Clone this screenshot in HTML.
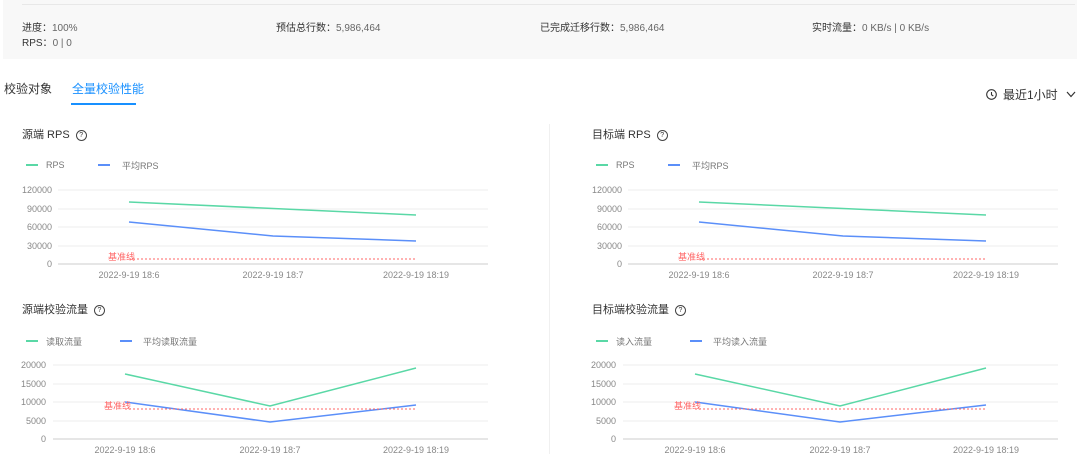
<!DOCTYPE html>
<html><head><meta charset="utf-8"><style>
body{margin:0;width:1080px;height:462px;background:#fff;font-family:"Liberation Sans","Noto Sans CJK SC",sans-serif;position:relative;overflow:hidden;color:#333}
.a{position:absolute;white-space:nowrap}
.s{font-size:10px;color:#333}.s b{font-weight:normal;color:#666}
.t{font-size:11px;color:#333}
.q{display:inline-block;width:9px;height:9px;border:1px solid #444;border-radius:50%;font-size:7px;text-align:center;line-height:9px;margin-left:6px;vertical-align:1px}
svg text{font-family:"Liberation Sans","Noto Sans CJK SC",sans-serif}
</style></head><body>
<div class="a" style="left:3px;top:0;width:1074px;height:59px;background:#f8f8f8"></div>
<div class="a" style="left:22px;top:4px;width:1053px;height:1px;background:#e8e8e8"></div>
<div class="a s" style="left:22px;top:19px">进度：<b>100%</b></div>
<div class="a s" style="left:22px;top:34px">RPS：<b>0 | 0</b></div>
<div class="a s" style="left:276px;top:19px">预估总行数：<b>5,986,464</b></div>
<div class="a s" style="left:540px;top:19px">已完成迁移行数：<b>5,986,464</b></div>
<div class="a s" style="left:812px;top:19px">实时流量：<b>0 KB/s | 0 KB/s</b></div>
<div class="a" style="font-size:12px;left:4px;top:80px;color:#333">校验对象</div>
<div class="a" style="font-size:12px;left:72px;top:80px;color:#1890ff">全量校验性能</div>
<div class="a" style="left:71px;top:103px;width:65px;height:2px;background:#1890ff"></div>
<div class="a" style="font-size:12px;left:986px;top:86px"><svg width="11" height="11" style="vertical-align:-1px;margin-right:6px"><circle cx="5.5" cy="5.5" r="4.8" fill="none" stroke="#333" stroke-width="1.1"/><path d="M5.5 3V5.8L7.3 7" fill="none" stroke="#333" stroke-width="1.1"/></svg>最近1小时<svg width="10" height="7" style="margin-left:8px;vertical-align:1px"><path d="M1 1L5 5.5L9 1" fill="none" stroke="#333" stroke-width="1.2"/></svg></div>
<div class="a" style="left:549px;top:124px;width:1px;height:330px;background:#f0f0f0"></div>

<svg class="a" style="left:0;top:0" width="1080" height="462">
<defs>
<g id="top">
<line x1="58" y1="190" x2="488" y2="190" stroke="#eee"/><line x1="58" y1="209" x2="488" y2="209" stroke="#eee"/><line x1="58" y1="227" x2="488" y2="227" stroke="#eee"/><line x1="58" y1="246" x2="488" y2="246" stroke="#eee"/><line x1="58" y1="264" x2="488" y2="264" stroke="#ccc"/>
<g font-size="9" fill="#888" text-anchor="end"><text x="52" y="193">120000</text><text x="52" y="212">90000</text><text x="52" y="230">60000</text><text x="52" y="249">30000</text><text x="52" y="267">0</text></g>
<g font-size="9" fill="#888" text-anchor="middle"><text x="129" y="278">2022-9-19 18:6</text><text x="273" y="278">2022-9-19 18:7</text><text x="416" y="278">2022-9-19 18:19</text></g>
<line x1="26" y1="165" x2="38" y2="165" stroke="#5ad8a6" stroke-width="2"/><text x="46" y="168" font-size="9" fill="#777">RPS</text>
<line x1="98" y1="165" x2="110" y2="165" stroke="#5b8ff9" stroke-width="2"/>
<polyline points="129,202 273,208.5 416,215" fill="none" stroke="#5ad8a6" stroke-width="1.5"/>
<polyline points="129,222 273,236 416,241" fill="none" stroke="#5b8ff9" stroke-width="1.5"/>
<line x1="129" y1="259" x2="416" y2="259" stroke="#f66" stroke-dasharray="2,2"/>
<text x="108" y="260" font-size="9" fill="#f66">基准线</text>
</g>
<g id="bot">
<line x1="53" y1="365" x2="488" y2="365" stroke="#eee"/><line x1="53" y1="384" x2="488" y2="384" stroke="#eee"/><line x1="53" y1="402" x2="488" y2="402" stroke="#eee"/><line x1="53" y1="421" x2="488" y2="421" stroke="#eee"/><line x1="53" y1="439" x2="488" y2="439" stroke="#ccc"/>
<g font-size="9" fill="#888" text-anchor="end"><text x="46" y="368">20000</text><text x="46" y="387">15000</text><text x="46" y="405">10000</text><text x="46" y="424">5000</text><text x="46" y="442">0</text></g>
<g font-size="9" fill="#888" text-anchor="middle"><text x="125" y="453">2022-9-19 18:6</text><text x="270" y="453">2022-9-19 18:7</text><text x="416" y="453">2022-9-19 18:19</text></g>
<line x1="26" y1="341" x2="38" y2="341" stroke="#5ad8a6" stroke-width="2"/>
<line x1="120" y1="341" x2="132" y2="341" stroke="#5b8ff9" stroke-width="2"/>
<polyline points="125,374 270,406 416,368" fill="none" stroke="#5ad8a6" stroke-width="1.5"/>
<polyline points="125,402 270,422 416,405" fill="none" stroke="#5b8ff9" stroke-width="1.5"/>
<line x1="125" y1="409" x2="416" y2="409" stroke="#f66" stroke-dasharray="2,2"/>
<text x="104" y="409" font-size="9" fill="#f66">基准线</text>
</g>
</defs>
<use href="#top"/><use href="#top" x="570"/>
<use href="#bot"/><use href="#bot" x="570"/>
</svg>
<div class="a t" style="left:22px;top:126px">源端 RPS<span class="q">?</span></div>
<div class="a t" style="left:592px;top:126px">目标端 RPS<span class="q">?</span></div>
<div class="a t" style="left:22px;top:301px">源端校验流量<span class="q">?</span></div>
<div class="a t" style="left:592px;top:301px">目标端校验流量<span class="q">?</span></div>
<div class="a" style="font-size:9px;color:#777;left:122px;top:159px">平均RPS</div>
<div class="a" style="font-size:9px;color:#777;left:692px;top:159px">平均RPS</div>
<div class="a" style="font-size:9px;color:#777;left:46px;top:335px">读取流量</div>
<div class="a" style="font-size:9px;color:#777;left:143px;top:335px">平均读取流量</div>
<div class="a" style="font-size:9px;color:#777;left:616px;top:335px">读入流量</div>
<div class="a" style="font-size:9px;color:#777;left:713px;top:335px">平均读入流量</div>
</body></html>
